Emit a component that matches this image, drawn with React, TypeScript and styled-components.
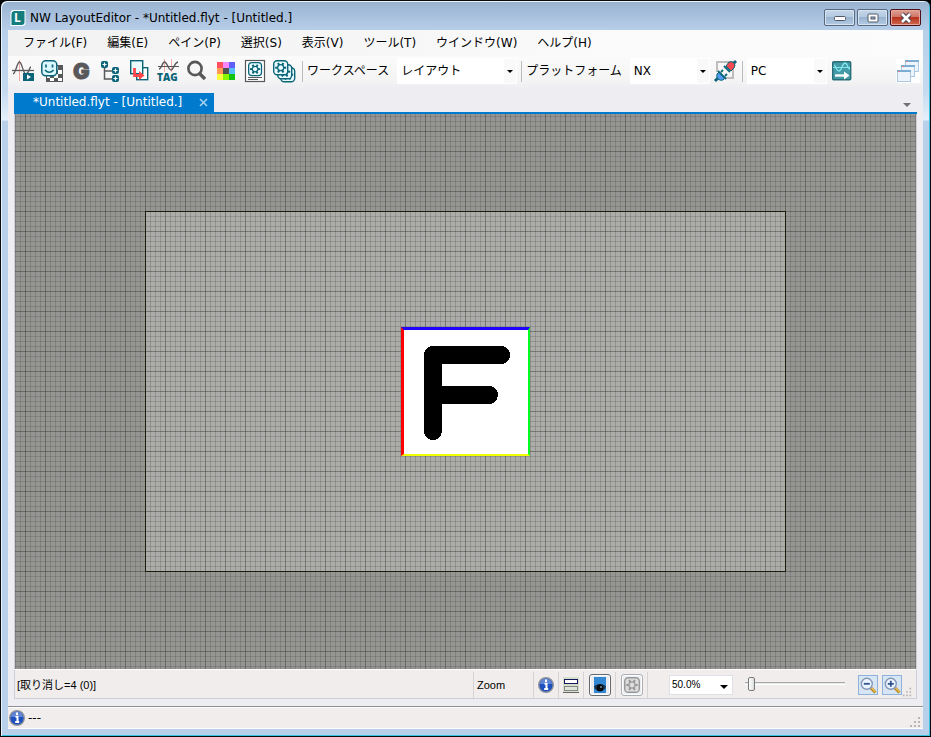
import React, { useState } from "react";
import styled, { createGlobalStyle, css } from "styled-components";

const uiFont = `"DejaVu Sans", "Noto Sans CJK JP", sans-serif`;
const compactFont = `"Liberation Sans", "Noto Sans CJK JP", sans-serif`;
const teal = "#0b6478";
const ink = "#58585a";

const GlobalStyle = createGlobalStyle`
  * { box-sizing: border-box; }
  html, body { margin: 0; padding: 0; background: #000; }
  button, input, select { font: inherit; color: inherit; margin: 0; padding: 0; }
  svg { display: block; flex: none; overflow: visible; }
`;

const Window = styled.div`
  min-height: 100vh;
  display: flex;
  flex-direction: column;
  padding: 0 7px 7px;
  border: 1px solid #0a0a0c;
  border-radius: 7px 7px 0 0;
  background: linear-gradient(#98b2d0 0, #b8cfea 30px, #c5daf0 90px, #e4f0fa 119px, #b9d0ea 120px);
  box-shadow: inset 1px 1px 0 #e8f6ff, inset -1px -1px 0 #35c4e0;
  color: #000;
  font: 12px/16px ${uiFont};
`;

const TitleBar = styled.header`
  height: 29px;
  display: flex;
  align-items: center;
  gap: 4px;
  padding: 4px 2px 0;
`;

const Title = styled.h1`
  margin: 0;
  flex: 1;
  font: 12px/18px ${uiFont};
`;

const WindowButtons = styled.div`
  display: flex;
  gap: 2px;
`;

const WindowButton = styled.button<{ $close?: boolean }>`
  width: 31px;
  height: 17px;
  display: flex;
  align-items: center;
  justify-content: center;
  border: 1px solid ${(p) => (p.$close ? "#4c1019" : "#58687f")};
  border-radius: 2px;
  background: ${(p) =>
    p.$close
      ? "linear-gradient(#e0a095 0, #cf7769 45%, #b9331e 50%, #cc6a50 100%)"
      : "linear-gradient(#c5d6e9 0, #b4c9e0 45%, #98b2d0 50%, #b5cbe4 100%)"};
  box-shadow: inset 0 0 0 1px ${(p) => (p.$close ? "#e5a79d" : "#d6e4f2")};
`;

const Client = styled.div`
  flex: 1;
  display: flex;
  flex-direction: column;
  background: #eeedf2;
`;

const MenuBar = styled.nav`
  height: 26px;
  display: flex;
  align-items: center;
  gap: 20px;
  padding: 0 15px;
  background: linear-gradient(90deg, #f1f1f1, #fbfbfb 70%, #fcfcfc);
`;

const MenuItem = styled.button`
  border: 0;
  background: none;
  white-space: nowrap;
  font: 12px/18px ${uiFont};
`;

const ToolBar = styled.div`
  height: 31px;
  display: flex;
  align-items: center;
  padding: 0 3px 1px 4px;
  background: linear-gradient(#fbfbfb, #f4f4f5 80%, #efeff1);
`;

const ToolGroup = styled.div`
  display: flex;
  align-items: center;
  gap: 5px;
  padding-right: 1px;
`;

const IconButton = styled.button`
  width: 24px;
  height: 24px;
  flex: none;
  display: block;
  border: 0;
  background: none;
`;

const PlugButton = styled(IconButton)`
  margin-left: 4px;
`;

const SendButton = styled(IconButton)`
  margin-left: 4px;
`;

const Separator = styled.span`
  width: 1px;
  height: 21px;
  margin: 0 4px;
  background: #bcbcc0;
`;

const Field = styled.label`
  display: flex;
  align-items: center;
  gap: 8px;
  white-space: nowrap;
`;

const Combo = styled.span<{ $width: number }>`
  width: ${(p) => p.$width}px;
  height: 26px;
  display: grid;
  align-items: center;
  background: linear-gradient(90deg, #fff calc(100% - 12px), #f9f9f9 0);
  border: 1px solid #fff;

  select, svg { grid-area: 1 / 1; }
  svg { justify-self: end; margin-right: 3px; pointer-events: none; }
  select {
    appearance: none;
    width: 100%;
    height: 24px;
    padding-left: 3px;
    border: 0;
    background: none;
  }
`;

const Spacer = styled.span`
  flex: 1;
`;

const Dock = styled.main`
  flex: 1;
  display: flex;
  flex-direction: column;
  padding: 6px 6px 0;
`;

const TabStrip = styled.div`
  height: 21px;
  display: flex;
  align-items: flex-start;
  justify-content: space-between;
  border-bottom: 2px solid #007acc;
`;

const Tab = styled.div`
  width: 200px;
  height: 19px;
  display: flex;
  align-items: center;
  justify-content: space-between;
  padding: 0 6px 1px 19px;
  background: #007acc;
  color: #fff;
  white-space: nowrap;
  font: 12px/18px ${uiFont};
`;

const SmallButton = styled.button`
  border: 0;
  background: none;
  display: block;
`;

const TabMenu = styled(SmallButton)`
  margin: 10px 6px 0 0;
`;

const grid = css`
  background-image:
    linear-gradient(90deg, rgba(50, 50, 40, 0.28) 1px, transparent 1px),
    linear-gradient(rgba(50, 50, 40, 0.28) 1px, transparent 1px),
    linear-gradient(90deg, rgba(60, 60, 50, 0.22) 1px, transparent 1px),
    linear-gradient(rgba(60, 60, 50, 0.22) 1px, transparent 1px);
  background-size: 20px 20px, 20px 20px, 5px 5px, 5px 5px;
`;

const Viewport = styled.section`
  flex: 1;
  display: flex;
  align-items: center;
  justify-content: center;
  border: 0 solid #d0d0dc;
  border-width: 0 1px;
  background-color: #959593;
  ${grid}
  background-position: 10px 17px;
`;

const Stage = styled.div`
  width: 641px;
  height: 361px;
  display: flex;
  align-items: center;
  justify-content: center;
  background-color: #acacab;
  ${grid}
  background-position: -1px -1px;
  border: 1px solid #1c1c08;
`;

const Pane = styled.div`
  width: 129px;
  height: 129px;
  border: solid;
  border-width: 3px 2px 2px 3px;
  border-color: #2000ff #00ff20 #f0ff00 #ff0000;
  background: #fff;
`;

const PaneStatus = styled.div`
  height: 30px;
  display: flex;
  align-items: center;
  padding: 2px 4px 1px 2px;
  border: 1px solid #cfcfdc;
  border-top: 1px solid #fff;
  background: #f0edec;
  font: 11px/16px ${compactFont};
`;

const History = styled.span`
  flex: 1;
  white-space: nowrap;
`;

const Cell = styled.div<{ $width: number }>`
  width: ${(p) => p.$width}px;
  height: 26px;
  display: flex;
  align-items: center;
  justify-content: center;
  border-left: 1px solid #d5d3d3;
`;

const ZoomCell = styled(Cell)`
  justify-content: flex-start;
  padding-left: 3px;
`;

const Toggle = styled.button<{ $on?: boolean }>`
  width: 22px;
  height: 22px;
  display: flex;
  align-items: center;
  justify-content: center;
  border: 1px solid ${(p) => (p.$on ? "#65686c" : "#aaaeb2")};
  border-radius: 3px;
  background: #e9edf1;
  box-shadow: inset 0 0 0 1px #fff;
`;

const ZoomTools = styled.div`
  display: flex;
  align-items: center;
  padding-left: 21px;
  border-left: 1px solid #d5d3d3;
  height: 26px;
`;

const ZoomCombo = styled(Combo)`
  height: 20px;
  border: 1px solid #dfe1e6;
  background: #fff;
  svg { margin: 4px 4px 0 0; }
  select { height: 18px; padding-left: 2px; font-size: 10px; }
`;

const Slider = styled.input`
  appearance: none;
  width: 100px;
  height: 16px;
  margin: 0 13px 2px 12px;
  background: none;

  &::-webkit-slider-runnable-track {
    height: 3px;
    border-top: 1px solid #a9a9a9;
    border-bottom: 1px solid #fff;
    background: #e5e9e8;
  }
  &::-webkit-slider-thumb {
    appearance: none;
    width: 7px;
    height: 14px;
    margin-top: -6px;
    border: 1px solid #76797c;
    border-radius: 2px;
    background: linear-gradient(90deg, #fff, #dcdcdc);
  }
`;

const ZoomButton = styled.button`
  width: 20px;
  height: 20px;
  display: flex;
  align-items: center;
  justify-content: center;
  border: 1px solid #8db3dc;
  background: #d7e5f4;

  & + & { margin-left: 4px; }
`;

const GripCorner = styled.span`
  align-self: flex-end;
`;

const StatusBar = styled.footer`
  height: 23px;
  margin-top: 7px;
  display: flex;
  align-items: center;
  justify-content: space-between;
  padding: 0 2px 0 1px;
  border-top: 1px solid #8e8e93;
  border-bottom: 1px solid #fff;
  box-shadow: inset 0 1px 0 #fff;
  background: #f0edec;
`;

const Message = styled.span`
  flex: 1;
  padding-left: 3px;
`;

const Arrow = ({ big, color = "#000" }: { big?: boolean; color?: string }) => (
  <svg width={big ? 8 : 6} height={big ? 4 : 3} viewBox="0 0 8 4">
    <path d="M0 0h8L4 4z" fill={color} />
  </svg>
);

const Icon = ({ children }: { children: React.ReactNode }) => (
  <svg width="24" height="24" viewBox="0 0 24 24" fill="none">{children}</svg>
);

const spokes = [0, 60, 120, 180, 240, 300];

interface GearTileProps {
  x: number;
  y: number;
  scale?: number;
  color?: string;
  fill?: string;
}

const GearTile = ({ x, y, scale = 1, color = teal, fill = "#eafbff" }: GearTileProps) => (
  <g transform={`translate(${x} ${y}) scale(${scale})`} stroke={color}>
    <rect x=".7" y=".7" width="14" height="14" rx="3.5" fill={fill} strokeWidth="1.4" />
    <g transform="translate(7.7 7.7)">
      {spokes.map((angle) => (
        <path key={angle} d="M3 0h2.500" transform={`rotate(${angle})`} strokeWidth="2" />
      ))}
      <circle r="3" fill={fill} strokeWidth="1.3" />
    </g>
  </g>
);

const AppIcon = () => (
  <svg width="16" height="16" viewBox="0 0 16 16">
    <path d="M3 0h12.5v13a3 3 0 0 1-3 3H.5V3A3 3 0 0 1 3 0z" fill="#f7ffff" />
    <path d="M4 1h10.500v11a3 3 0 0 1-3 3h-10V4a3 3 0 0 1 2.500-3z" fill="#157c7e" />
    <text x="4" y="12" fontFamily="Open Sans" fontWeight="700" fontSize="12" fill="#fff">L</text>
  </svg>
);

const CurvePlay = () => (
  <Icon>
    <path d="M7.5 1v21" stroke="#f4a9a4" />
    <path d="M0 11.5h22" stroke={ink} strokeWidth="1.3" />
    <path d="M1 15c3-1 4-12 6.500-12S11 15 14 15s3-7 5-7" stroke={ink} strokeWidth="1.3" />
    <rect x="11" y="14" width="11" height="8" fill={teal} />
    <path d="m15 15.500 4 2.500-4 2.500z" fill="#fff" />
  </Icon>
);

const SmileIcon = () => (
  <Icon>
    <rect x="5.5" y="6.500" width="16" height="16" fill="#fff" stroke={ink} />
    <path d="M17 7h4v4h-4zM13 11h4v4h-4zM17 15h4v4h-4zM13 19h4v3h-4zM9 15h4v4H9zM6 19h3v3H6z" fill={ink} />
    <rect x=".8" y="1.800" width="15" height="15" rx="4" fill="#dcf8ff" stroke={teal} strokeWidth="1.5" />
    <path d="M5 5.500v3M11.500 5.500v3M4 11q4.300 4.500 8.600 0" stroke={teal} strokeWidth="1.7" />
  </Icon>
);

const LetterG = () => (
  <Icon>
    <text x="3" y="20" fontFamily="Inter" fontWeight="900" fontSize="22" fill={ink} stroke={ink}>G</text>
  </Icon>
);

const TreeIcon = () => (
  <Icon>
    <path d="M5.500 8v12h8M5.500 12h8" stroke={ink} strokeWidth="1.5" />
    {[[2, 2], [13, 8], [13, 16]].map(([x, y]) => (
      <g key={y}>
        <rect x={x} y={y} width="7" height="7" rx="2" fill={teal} />
        <path d={`M${x + 1.5} ${y + 3.5}h4M${x + 3.5} ${y + 1.5}v4`} stroke="#fff" strokeWidth="1.2" />
      </g>
    ))}
  </Icon>
);

const SwapIcon = () => (
  <Icon>
    <rect x="8.700" y="8.700" width="11" height="12" fill="#fff" stroke={teal} strokeWidth="1.4" />
    <rect x="2.700" y="1.700" width="12" height="13" fill="#eafbff" stroke={teal} strokeWidth="1.4" />
    <path d="M6.500 9v7.500h5" stroke="#ff474c" strokeWidth="2.8" />
    <path d="m11 12 5.500 4.500L11 21z" fill="#ff474c" />
  </Icon>
);

const TagIcon = () => (
  <Icon>
    <path d="M7.500 0v13M14.500 0v13" stroke="#f4a9a4" />
    <path d="M1 7.500h21" stroke={ink} />
    <path d="M2 10c3 0 3-7 5.500-7s4 8 6.500 8 3-7 7-8" stroke={ink} strokeWidth="1.3" />
    <text x="0" y="22" fontFamily="Open Sans" fontWeight="800" fontSize="10" fill={teal}>TAG</text>
  </Icon>
);

const SearchIcon = () => (
  <Icon>
    <circle cx="9" cy="9.500" r="6.600" stroke={ink} strokeWidth="2.6" />
    <path d="m13.500 14.500 5.500 5.500" stroke={ink} strokeWidth="3.4" />
  </Icon>
);

const swatches = ["#ff5060", "#f985fa", "#6060f8", "#ff9955", "#505050", "#58bdfb", "#fbfb40", "#88f800", "#10c410"];

const PaletteIcon = () => (
  <Icon>
    {swatches.map((c, i) => (
      <rect key={c} x={2 + (i % 3) * 6} y={3 + Math.floor(i / 3) * 6} width="6" height="6" fill={c} />
    ))}
  </Icon>
);

const PartListIcon = () => (
  <Icon>
    <rect x="1.500" y="1.500" width="19" height="21" fill="#fff" stroke={ink} strokeWidth="1.2" />
    <GearTile x={4} y={3} scale={0.92} />
    <path d="M4 18.500h14M4 20.500h10" stroke={ink} />
  </Icon>
);

const PartStackIcon = () => (
  <Icon>
    <GearTile x={7} y={8} />
    <GearTile x={4} y={5} />
    <GearTile x={0} y={1} />
  </Icon>
);

const PlugIcon = () => (
  <Icon>
    <path d="M9 3h10v16h-6M3 13V3h7M8 19h11" stroke="#bdbdbd" strokeWidth="2" />
    <path d="m1 22 5-5M17 7l5-5" stroke={teal} strokeWidth="3" />
    <path d="m5 13 6 6-2 2q-3 1-5-1t-1-5z" fill="#529bf5" stroke={teal} />
    <path d="m4 12 8 8M10 7l6 6M7 13l2-2M11 17l2-2" stroke={teal} strokeWidth="1.8" />
    <path d="m12 7 3-4q3-1 5 1t0 5l-3 3z" fill="#f44950" stroke={teal} />
  </Icon>
);

const SendIcon = () => (
  <Icon>
    <rect x="1.700" y="2.700" width="18" height="18" rx="1" fill="#4499a6" stroke="#286f78" strokeWidth="1.4" />
    <path d="M2 8.500h17" stroke="#85e6ed" />
    <path d="M3 6c2 0 2 6 5 6s3-8 6-8 2 6 5 6" stroke="#7ce5ee" strokeWidth="1.3" />
    <path d="M4 16.500h11" stroke="#fff" strokeWidth="2.4" />
    <path d="m13 12.500 5.500 4-5.500 4z" fill="#fff" />
  </Icon>
);

const CascadeIcon = () => (
  <Icon>
    <rect width="24" height="24" fill="#fff" />
    {[[9, 1], [5, 6], [1, 11]].map(([x, y]) => (
      <g key={x}>
        <rect x={x + 0.5} y={y + 0.5} width="13" height="11" fill="#edf4fb" stroke="#acc9e1" />
        <path d={`M${x} ${y + 1}h14`} stroke="#7caed5" strokeWidth="2" />
        <path d={`M${x + 1} ${y + 1.5}h2`} stroke="#df8080" />
      </g>
    ))}
  </Icon>
);

const InfoIcon = () => (
  <svg width="16" height="16" viewBox="0 0 16 16">
    <circle cx="8" cy="8" r="7.300" fill="#1e50c0" stroke="#92949a" strokeWidth="1.4" />
    <path d="M2 7a6 5.500 0 0 1 12 0z" fill="#6085d5" />
    <path d="M8 2.500v2.600M6.500 6.800h2V12M6.200 12h4" stroke="#fff" strokeWidth="2" fill="none" />
  </svg>
);

const RowsIcon = () => (
  <svg width="16" height="16" viewBox="0 0 16 16">
    <path d="M0 0h16v16H0z" fill="#d3dfc9" />
    <path d="M0 15.500h16" stroke="#666" />
    <rect x="1.500" y="2.500" width="13" height="4" fill="#fff" stroke="#15155f" />
    <rect x="1.500" y="9.500" width="13" height="4" fill="#dde3d8" stroke="#888" />
  </svg>
);

const EyeIcon = () => (
  <svg width="14" height="16" viewBox="0 0 14 16">
    <path d="M1 0h12v16H1z" fill="#3388d3" />
    <path d="M1 11q6-6 12 0-6 7-12 0z" fill="#193750" />
    <circle cx="7" cy="11" r="3.300" fill="#05080c" />
    <path d="M1 10q6-5 12 0" stroke="#06101a" fill="none" />
    <circle cx="8" cy="10" r=".8" fill="#cce8ff" />
  </svg>
);

const MagnifierIcon = ({ plus }: { plus?: boolean }) => (
  <svg width="16" height="16" viewBox="0 0 16 16" fill="none">
    <path d="m11 11 4.500 4.500" stroke="#a8801e" strokeWidth="3" />
    <path d="m11.500 11 4 4" stroke="#f3c64b" strokeWidth="1.2" />
    <circle cx="6.800" cy="6.800" r="5.500" fill="#ecf5ff" stroke="#8296b5" strokeWidth="1.4" />
    <path d={plus ? "M3.800 6.800h6M6.800 3.800v6" : "M3.800 6.800h6"} stroke="#31548c" strokeWidth="1.8" />
  </svg>
);

const Grip = ({ size = 12 }: { size?: number }) => (
  <svg width={size} height={size} viewBox="0 0 12 12" fill="#b8b5b3">
    <path d="M9 1h2v2H9zM5 5h2v2H5zM9 5h2v2H9zM1 9h2v2H1zM5 9h2v2H5zM9 9h2v2H9z" />
  </svg>
);

const menus = ["ファイル(F)", "編集(E)", "ペイン(P)", "選択(S)", "表示(V)", "ツール(T)", "ウインドウ(W)", "ヘルプ(H)"];

const tools: [string, React.FC][] = [
  ["カーブ", CurvePlay],
  ["テクスチャ", SmileIcon],
  ["グループ", LetterG],
  ["階層", TreeIcon],
  ["入れ替え", SwapIcon],
  ["タグ", TagIcon],
  ["検索", SearchIcon],
  ["カラー", PaletteIcon],
  ["部品", PartListIcon],
  ["部品一覧", PartStackIcon],
];

export default function App() {
  const [zoom, setZoom] = useState(3);
  return (
    <>
      <GlobalStyle />
      <Window>
        <TitleBar>
          <AppIcon />
          <Title>NW LayoutEditor - *Untitled.flyt - [Untitled.]</Title>
          <WindowButtons>
            <WindowButton aria-label="最小化">
              <svg width="12" height="6" viewBox="0 0 12 6">
                <rect x=".5" y="1.500" width="11" height="4" rx="1" fill="#fff" stroke="#515a68" />
              </svg>
            </WindowButton>
            <WindowButton aria-label="最大化">
              <svg width="12" height="10" viewBox="0 0 12 10">
                <rect x="1" y="1" width="10" height="8" rx="1" fill="#fff" stroke="#515a68" />
                <rect x="4" y="4" width="4" height="2" fill="#9db5d0" stroke="#515a68" />
              </svg>
            </WindowButton>
            <WindowButton $close aria-label="閉じる">
              <svg width="12" height="10" viewBox="0 0 12 10">
                <path d="m2 1 8 8M10 1 2 9" stroke="#4d4250" strokeWidth="4.6" />
                <path d="m2 1 8 8M10 1 2 9" stroke="#fff" strokeWidth="2.6" />
              </svg>
            </WindowButton>
          </WindowButtons>
        </TitleBar>
        <Client>
          <MenuBar>
            {menus.map((m) => <MenuItem key={m}>{m}</MenuItem>)}
          </MenuBar>
          <ToolBar>
            <ToolGroup>
              {tools.map(([name, Drawing]) => (
                <IconButton key={name} aria-label={name}><Drawing /></IconButton>
              ))}
            </ToolGroup>
            <Separator />
            <Field>
              ワークスペース
              <Combo $width={120}>
                <select><option>レイアウト</option></select>
                <Arrow />
              </Combo>
            </Field>
            <Separator />
            <Field>
              プラットフォーム
              <Combo $width={80}>
                <select><option>NX</option></select>
                <Arrow />
              </Combo>
            </Field>
            <PlugButton aria-label="接続"><PlugIcon /></PlugButton>
            <Separator />
            <Combo $width={80}>
              <select aria-label="接続先"><option>PC</option></select>
              <Arrow />
            </Combo>
            <SendButton aria-label="転送"><SendIcon /></SendButton>
            <Spacer />
            <IconButton aria-label="ウインドウを並べる"><CascadeIcon /></IconButton>
          </ToolBar>
          <Dock>
            <TabStrip>
              <Tab>
                *Untitled.flyt - [Untitled.]
                <SmallButton aria-label="タブを閉じる">
                  <svg width="9" height="9" viewBox="0 0 9 9">
                    <path d="m1 1 7 7M8 1 1 8" stroke="#a5d2f0" strokeWidth="1.6" />
                  </svg>
                </SmallButton>
              </Tab>
              <TabMenu aria-label="タブ一覧"><Arrow big color="#717171" /></TabMenu>
            </TabStrip>
            <Viewport>
              <Stage>
                <Pane>
                  <svg width="124" height="124" viewBox="0 0 124 124" shapeRendering="crispEdges">
                    <path
                      d="M97 25H29v76M29 65h56"
                      fill="none"
                      stroke="#000"
                      strokeWidth="18"
                      strokeLinecap="round"
                      strokeLinejoin="round"
                    />
                  </svg>
                </Pane>
              </Stage>
            </Viewport>
            <PaneStatus>
              <History>[取り消し=4 (0)]</History>
              <ZoomCell $width={60}>Zoom</ZoomCell>
              <Cell $width={25}><SmallButton aria-label="情報"><InfoIcon /></SmallButton></Cell>
              <Cell $width={25}><SmallButton aria-label="行表示"><RowsIcon /></SmallButton></Cell>
              <Cell $width={32}><Toggle $on aria-label="表示"><EyeIcon /></Toggle></Cell>
              <Cell $width={32}>
                <Toggle aria-label="部品表示">
                  <svg width="18" height="18" viewBox="0 0 18 18" fill="none">
                    <GearTile x={1} y={1} scale={1.04} color="#999" fill="#ddd" />
                  </svg>
                </Toggle>
              </Cell>
              <ZoomTools>
                <ZoomCombo $width={64}>
                  <select aria-label="倍率"><option>50.0%</option></select>
                  <Arrow big />
                </ZoomCombo>
                <Slider
                  type="range"
                  aria-label="ズーム"
                  min={0}
                  max={100}
                  value={zoom}
                  onChange={(e) => setZoom(Number(e.target.value))}
                />
                <ZoomButton aria-label="縮小"><MagnifierIcon /></ZoomButton>
                <ZoomButton aria-label="拡大"><MagnifierIcon plus /></ZoomButton>
              </ZoomTools>
              <GripCorner><Grip size={10} /></GripCorner>
            </PaneStatus>
          </Dock>
          <StatusBar>
            <InfoIcon />
            <Message>---</Message>
            <GripCorner><Grip /></GripCorner>
          </StatusBar>
        </Client>
      </Window>
    </>
  );
}
